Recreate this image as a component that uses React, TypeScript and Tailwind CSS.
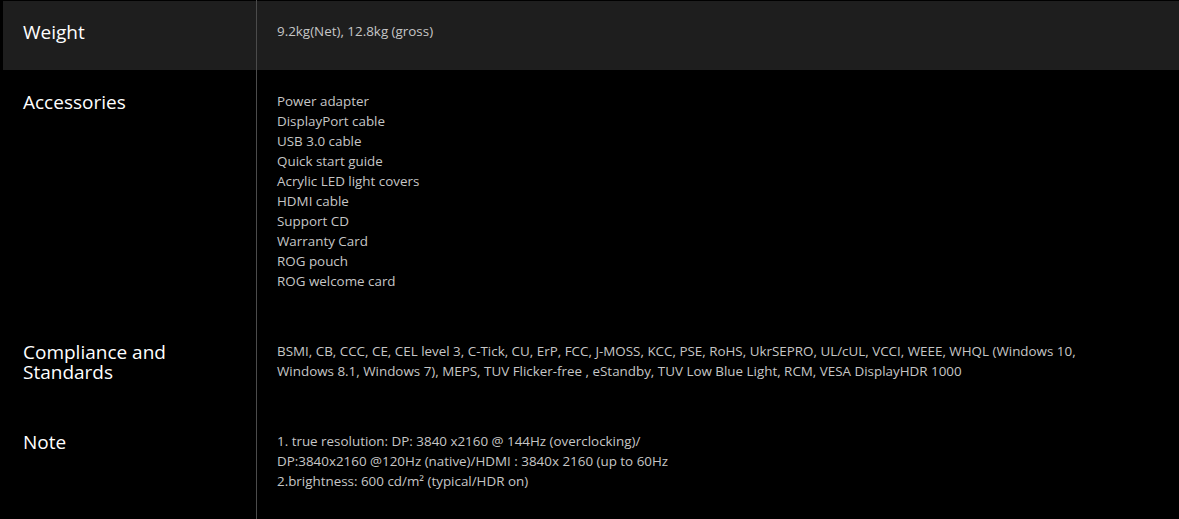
const specs = [
  {
    label: ["Weight"],
    lines: ["9.2kg(Net), 12.8kg (gross)"],
    shaded: true,
  },
  {
    label: ["Accessories"],
    lines: [
      "Power adapter",
      "DisplayPort cable",
      "USB 3.0 cable",
      "Quick start guide",
      "Acrylic LED light covers",
      "HDMI cable",
      "Support CD",
      "Warranty Card",
      "ROG pouch",
      "ROG welcome card",
    ],
  },
  {
    label: ["Compliance and", "Standards"],
    lines: [
      "BSMI, CB, CCC, CE, CEL level 3, C-Tick, CU, ErP, FCC, J-MOSS, KCC, PSE, RoHS, UkrSEPRO, UL/cUL, VCCI, WEEE, WHQL (Windows 10,",
      "Windows 8.1, Windows 7), MEPS, TUV Flicker-free , eStandby, TUV Low Blue Light, RCM, VESA DisplayHDR 1000",
    ],
  },
  {
    label: ["Note"],
    lines: [
      "1. true resolution: DP: 3840 x2160 @ 144Hz (overclocking)/",
      "DP:3840x2160 @120Hz (native)/HDMI : 3840x 2160 (up to 60Hz",
      "2.brightness: 600 cd/m² (typical/HDR on)",
    ],
  },
];

export default function App() {
  return (
    <div
      className="w-[1179px] h-[519px] overflow-hidden bg-black pl-[3px]"
      style={{ fontFamily: '"Open Sans", "Noto Sans", sans-serif' }}
    >
      {specs.map((row, i) => (
        <div
          key={i}
          className={`flex ${row.shaded ? "bg-[#1e1e1e] shadow-[inset_0_1px_0_#000]" : "bg-black"}`}
        >
          <div className="w-[254px] shrink-0 pl-[20px] pt-[22px] pb-[28px] border-r border-[#4b4b4b] text-white text-[19px] leading-[20px]">
            {row.label.map((l, j) => (
              <div key={j}>{l}</div>
            ))}
          </div>
          <div className="pl-[20px] pt-[21px] pb-[29px] text-[#c6c6c6] text-[13.4px] leading-[20px] whitespace-nowrap">
            {row.lines.map((l, j) => (
              <div key={j}>{l}</div>
            ))}
          </div>
        </div>
      ))}
    </div>
  );
}
